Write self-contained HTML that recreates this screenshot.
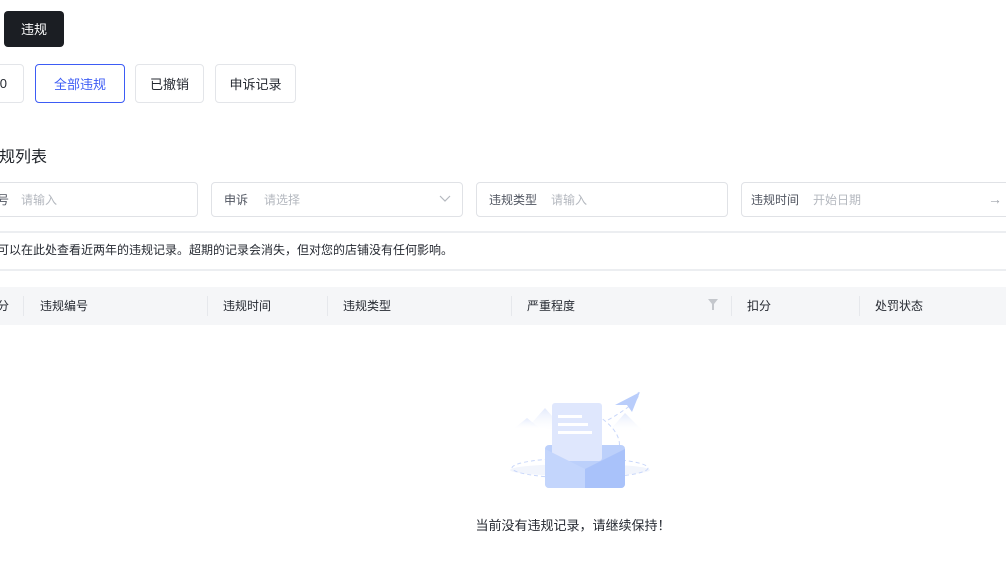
<!DOCTYPE html>
<html><head><meta charset="utf-8"><style>
body{margin:0;width:1006px;height:573px;overflow:hidden;background:#fff;font-family:"Liberation Sans","Noto Sans CJK SC",sans-serif;color:#1f2329;position:relative}
.a{position:absolute}
.btn{position:absolute;border:1px solid #e3e5e9;border-radius:4px;box-sizing:border-box;font-size:13px;display:flex;align-items:center;justify-content:center;color:#252931}
.inp{position:absolute;top:182px;height:35px;border:1px solid #e0e2e6;border-radius:4px;box-sizing:border-box;font-size:12px;display:flex;align-items:center}
.inp .l{color:#505560;margin-left:12px}.inp .p{color:#b4b8bf;margin-left:14px}
.th{position:absolute;top:297px;font-size:12px;color:#252931}
.dv{position:absolute;top:296px;width:1px;height:20px;background:#e6e8ec}
</style></head><body>
<div class="a" style="left:4px;top:11px;width:60px;height:36px;background:#1b1e23;border-radius:4px;color:#fff;font-size:13px;display:flex;align-items:center;justify-content:center;padding-bottom:1px;box-sizing:border-box">违规</div>
<div class="btn" style="left:-20px;top:64px;width:44px;height:39px;justify-content:flex-end;padding-right:16px">0</div>
<div class="btn" style="left:35px;top:64px;width:90px;height:39px;border-color:#3d5cf5;color:#3d5cf5">全部违规</div>
<div class="btn" style="left:135px;top:64px;width:69px;height:39px">已撤销</div>
<div class="btn" style="left:215px;top:64px;width:81px;height:39px">申诉记录</div>
<div class="a" style="left:-1px;top:143px;font-size:16px">规列表</div>
<div class="inp" style="left:-20px;width:218px"><span class="l" style="margin-left:16px">号</span><span class="p" style="margin-left:12px">请输入</span></div>
<div class="inp" style="left:211px;width:252px"><span class="l">申诉</span><span class="p" style="margin-left:16px">请选择</span>
<svg class="a" style="right:11px;top:12px" width="12" height="8" viewBox="0 0 12 8"><path d="M1 1l5 5 5-5" fill="none" stroke="#b4b8bf" stroke-width="1.2"/></svg></div>
<div class="inp" style="left:476px;width:252px"><span class="l">违规类型</span><span class="p" style="margin-left:14px">请输入</span></div>
<div class="inp" style="left:741px;width:280px"><span class="l" style="margin-left:9px">违规时间</span><span class="p">开始日期</span><span class="a" style="left:246px;top:8px;color:#a0a4ab;font-size:14px">→</span></div>
<div class="a" style="left:0;top:231px;width:1006px;height:2px;background:#eceef1"></div>
<div class="a" style="left:-3px;top:241px;font-size:12px;color:#252931">可以在此处查看近两年的违规记录。超期的记录会消失，但对您的店铺没有任何影响。</div>
<div class="a" style="left:0;top:269px;width:1006px;height:2px;background:#eceef1"></div>
<div class="a" style="left:0;top:287px;width:1006px;height:38px;background:#f5f6f8"></div>
<div class="th" style="left:-3px">分</div><div class="dv" style="left:23px"></div>
<div class="th" style="left:40px">违规编号</div><div class="dv" style="left:207px"></div>
<div class="th" style="left:223px">违规时间</div><div class="dv" style="left:327px"></div>
<div class="th" style="left:343px">违规类型</div><div class="dv" style="left:511px"></div>
<div class="th" style="left:527px">严重程度</div>
<svg class="a" style="left:708px;top:299px" width="10" height="11" viewBox="0 0 10 11"><path d="M0 0h10L6 5v6H4V5z" fill="#c4c7cc"/></svg>
<div class="dv" style="left:731px"></div>
<div class="th" style="left:747px">扣分</div><div class="dv" style="left:859px"></div>
<div class="th" style="left:875px">处罚状态</div>
<svg class="a" style="left:500px;top:385px" width="160" height="105" viewBox="0 0 160 105">
<defs><linearGradient id="m" x1="0" y1="0" x2="0" y2="1"><stop offset="0" stop-color="#e3eafc"/><stop offset="1" stop-color="#fff" stop-opacity="0"/></linearGradient></defs>
<path d="M30 40l15-17 22 25z" fill="url(#m)"/><path d="M12 45l15-12 15 12z" fill="url(#m)"/><path d="M110 45l15-17 20 20z" fill="url(#m)"/>
<ellipse cx="80" cy="85" rx="70" ry="6" fill="#f2f5fc"/>
<ellipse cx="80" cy="83" rx="68" ry="10" fill="none" stroke="#c9d7fa" stroke-dasharray="4 3"/>
<path d="M108 35q35-20 30-28" fill="none" stroke="#c9d7fa" stroke-dasharray="4 3"/>
<path d="M97 30q30 20 20 40" fill="none" stroke="#c9d7fa" stroke-dasharray="4 3"/>
<path d="M115 20l25-13-8 20-5-7z" fill="#b9cdfb"/>
<rect x="45" y="60" width="80" height="43" rx="4" fill="#bcd0fb"/>
<rect x="52" y="18" width="50" height="58" rx="3" fill="#dfe7fd"/>
<rect x="58" y="30" width="24" height="3" fill="#fff"/><rect x="58" y="38" width="30" height="3" fill="#fff"/><rect x="58" y="46" width="34" height="3" fill="#fff"/>
<path d="M45 64l40 20v19H49a4 4 0 0 1-4-4z" fill="#c3d5fc"/><path d="M125 64L85 84v19h36a4 4 0 0 0 4-4z" fill="#a9c2fa"/>
</svg>
<div class="a" style="left:0;width:1146px;top:515px;text-align:center;font-size:13px;color:#252931">当前没有违规记录，请继续保持！</div>
</body></html>
